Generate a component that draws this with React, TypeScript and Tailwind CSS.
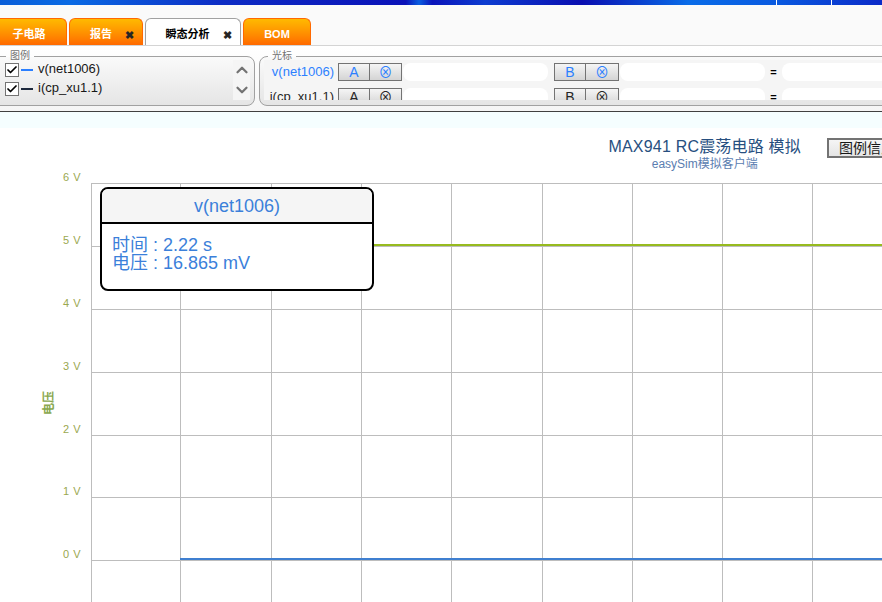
import type { ReactNode } from "react";
import { Check, ChevronDown, ChevronUp } from "lucide-react";

const font = { fontFamily: '"Liberation Sans", "Noto Sans CJK SC", sans-serif' };

const yLabels = [
  { label: "6 V", y: 183 },
  { label: "5 V", y: 246 },
  { label: "4 V", y: 309 },
  { label: "3 V", y: 372 },
  { label: "2 V", y: 435 },
  { label: "1 V", y: 497 },
  { label: "0 V", y: 560 }
];
const xLines = [91, 180, 271, 361, 451, 542, 632, 722, 812];

function Tab({ label, active, close, className }: { label: string; active?: boolean; close?: boolean; className: string }) {
  return (
    <div
      className={`relative flex h-[27px] shrink-0 items-center justify-center rounded-t-md border border-b-0 pt-1 text-[11px] font-bold ${className} ${
        active
          ? "border-neutral-400 bg-white text-black"
          : "border-orange-500 bg-gradient-to-b from-amber-400 to-orange-500 text-white"
      }`}
    >
      {label}
      {close && <span className="absolute top-2 right-2 text-[11px] leading-4 text-neutral-800">✖</span>}
    </div>
  );
}

function Legend({ label, color }: { label: string; color: string }) {
  return (
    <div className="flex h-[19px] items-center">
      <span className="flex size-3.5 items-center justify-center border border-neutral-500 bg-white">
        <Check size={12} strokeWidth={3.5} className="text-black" />
      </span>
      <span className={`mr-1 ml-0.5 h-0.5 w-3 ${color}`} />
      <span className="pb-0.5 pl-px text-[13px] text-neutral-900">{label}</span>
    </div>
  );
}

function CursorButton({ children, className, color }: { children: ReactNode; className: string; color: string }) {
  return (
    <span className={`flex h-[18px] shrink-0 items-center justify-center border border-neutral-500 bg-gradient-to-b from-neutral-100 to-neutral-300 text-sm ${className} ${color}`}>
      {children}
    </span>
  );
}

function CursorRow({ label, color }: { label: string; color: string }) {
  return (
    <div className="flex h-[18px] items-center">
      <span className={`w-[74px] shrink-0 pr-1 text-right text-[13px] ${color}`}>{label}</span>
      <CursorButton className="w-8" color={color}>A</CursorButton>
      <CursorButton className="-ml-px w-[33px]" color={color}>⊗</CursorButton>
      <span className="ml-px h-[18px] w-[145px] shrink-0 rounded-lg bg-white" />
      <CursorButton className="ml-1.5 w-8" color={color}>B</CursorButton>
      <CursorButton className="-ml-px w-[34px]" color={color}>⊗</CursorButton>
      <span className="ml-px h-[18px] w-[145px] shrink-0 rounded-lg bg-white" />
      <span className="w-[17px] shrink-0 text-center text-[11px] font-bold text-black">=</span>
      <span className="h-[18px] w-40 shrink-0 rounded-lg bg-white" />
    </div>
  );
}

export default function App() {
  return (
    <div className="h-screen w-full overflow-hidden bg-white" style={font}>
      <div className="relative h-[5px] bg-[linear-gradient(90deg,#0a5ed8_0%,#0a6ae4_8%,#0d2cc4_25%,#0b12b8_46%,#0a5ee0_47.5%,#0b14ba_49%,#0d3cd0_55%,#0a0eb0_66%,#0a6ce8_78%,#0a5ae0_88%,#0b2ac8_100%)]">
        <span className="absolute top-0 left-[776px] h-full w-px bg-white" />
        <span className="absolute top-0 left-[831px] h-full w-px bg-white" />
      </div>

      <div className="flex h-[41px] items-end gap-0.5 border-b border-neutral-300 bg-neutral-50">
        <Tab label="子电路" className="w-[67px] rounded-tl-none border-l-0 pr-2" />
        <Tab label="报告" close className="w-[74px] pr-2.5" />
        <Tab label="瞬态分析" active close className="w-24 pl-px pr-3" />
        <Tab label="BOM" className="w-[68px]" />
      </div>

      <div className="flex h-[66px] gap-1 overflow-hidden border-b border-neutral-700 bg-gradient-to-b from-white to-neutral-100 pt-1">
        <fieldset className="-ml-2 h-14 w-[263px] shrink-0 rounded-lg border border-neutral-400 bg-gradient-to-b from-neutral-50 to-neutral-200 pr-1 pl-3">
          <legend className="ml-px px-1 text-[10px] leading-3 text-neutral-500">图例</legend>
          <div className="-mt-0.5 flex justify-between">
            <div>
              <Legend label="v(net1006)" color="bg-blue-500" />
              <Legend label="i(cp_xu1.1)" color="bg-slate-800" />
            </div>
            <div className="flex h-10 w-[17px] flex-col items-center justify-around bg-neutral-100 text-neutral-500">
              <ChevronUp size={18} strokeWidth={3} />
              <ChevronDown size={18} strokeWidth={3} />
            </div>
          </div>
        </fieldset>
        <fieldset className="h-14 grow rounded-lg border border-neutral-400 bg-gradient-to-b from-neutral-50 to-neutral-200 pl-1">
          <legend className="ml-1 px-1 text-[10px] leading-3 text-neutral-500">光标</legend>
          <div className="-mt-0.5 flex h-10 flex-col gap-[7px] overflow-hidden bg-neutral-100 pt-[3px]">
            <CursorRow label="v(net1006)" color="text-blue-500" />
            <CursorRow label="i(cp_xu1.1)" color="text-neutral-800" />
          </div>
        </fieldset>
      </div>

      <div className="h-4 bg-cyan-50/50" />

      <div className="flex h-[60px] items-start justify-end pt-2.5">
        <div className="-mt-px mr-[26px] flex flex-col items-center">
          <span className="text-base leading-5 tracking-[0.2px] text-[#274f7f]">MAX941 RC震荡电路 模拟</span>
          <span className="mt-px text-xs leading-3 text-[#5a7db0]">easySim模拟客户端</span>
        </div>
        <span className="-mr-[25px] flex h-5 w-20 shrink-0 items-center justify-center border-2 border-neutral-500 bg-gradient-to-b from-neutral-100 to-neutral-200 text-sm whitespace-nowrap text-neutral-900">
          图例信息
        </span>
      </div>

      <svg className="absolute top-0 left-0" width="882" height="602" viewBox="0 0 882 602" style={{ pointerEvents: "none" }}>
        {yLabels.map((t) => (
          <g key={t.label}>
            <line x1="91" x2="882" y1={t.y + 0.5} y2={t.y + 0.5} stroke="#bdbdbd" />
            <text x="81" y={t.y - 2} textAnchor="end" fontSize="11" letterSpacing="0.5" fill="#9aa84f">{t.label}</text>
          </g>
        ))}
        {xLines.map((x) => (
          <line key={x} x1={x + 0.5} x2={x + 0.5} y1="183" y2="602" stroke="#bdbdbd" />
        ))}
        <line x1="180" x2="882" y1="245" y2="245" stroke="#97bb1f" strokeWidth="2" />
        <line x1="180" x2="882" y1="559" y2="559" stroke="#3f7fd0" strokeWidth="2" />
        <text x="0" y="0" transform="translate(53 415) rotate(-90)" fontSize="12" fontWeight="bold" fill="#8aa84f">电压</text>
      </svg>

      <div className="absolute top-[187px] left-[100px] h-[104px] w-[274px] overflow-hidden rounded-lg border-2 border-black bg-white text-[#3b80da]">
        <div className="flex h-[35px] items-center justify-center border-b-2 border-black bg-neutral-100 text-lg">v(net1006)</div>
        <div className="px-2.5 pt-3 text-lg leading-[18px]">
          <p>时间 : 2.22 s</p>
          <p>电压 : 16.865 mV</p>
        </div>
      </div>
    </div>
  );
}
